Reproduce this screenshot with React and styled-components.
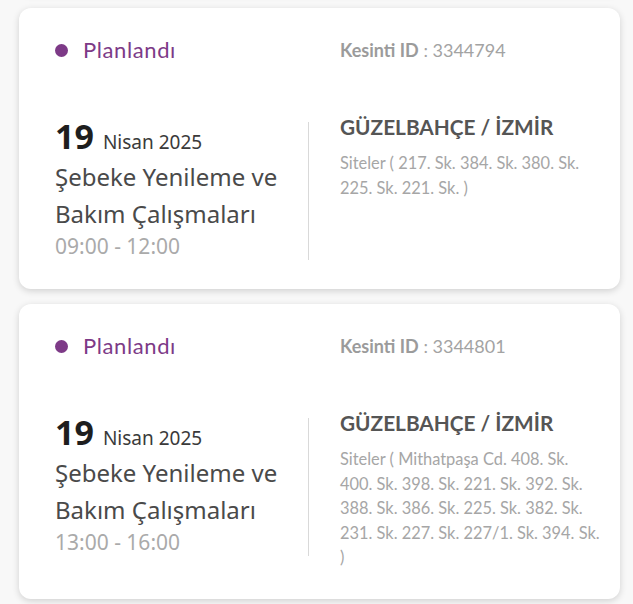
import React from "react";
import styled, { createGlobalStyle } from "styled-components";

const GlobalStyle = createGlobalStyle`
  html, body { margin: 0; padding: 0; background: #f8f8f8; }
  body { font-family: "Lato", "Noto Sans", sans-serif; }
  * { box-sizing: border-box; }
`;

const Page = styled.div`
  padding: 8px 13px 20px 19px;
  display: flex;
  flex-direction: column;
  gap: 15px;
  overflow: hidden;
  height: 604px;
`;

const PrevTail = styled.div`
  height: 20px;
  margin-top: -35px;
  flex: none;
  background: #fff;
  border-radius: 0 0 12px 12px;
  box-shadow: 0 2px 7px rgba(0, 0, 0, 0.16);
`;

const Card = styled.div`
  flex: none;
  background: #fff;
  border-radius: 12px;
  box-shadow: 0 2px 7px rgba(0, 0, 0, 0.16);
  padding: 28px 36px 29px 36px;
  display: grid;
  grid-template-columns: 254px 1fr;
  align-items: start;
  row-gap: 51px;
`;

const Status = styled.div`
  display: flex;
  align-items: center;
  gap: 15px;
  font-family: "Lato", sans-serif;
  font-size: 22px;
  letter-spacing: 0.6px;
  line-height: 28px;
  color: #7d3a87;
`;

const Dot = styled.span`
  width: 13px;
  height: 13px;
  margin-top: 1px;
  border-radius: 50%;
  background: #7d3a87;
  flex: none;
`;

const OutageId = styled.div`
  padding-left: 31px;
  font-family: "Lato", sans-serif;
  font-size: 18px;
  line-height: 28px;
  color: #a3a3a3;
`;

const IdLabel = styled.span`
  font-weight: 700;
  color: #9b9b9b;
`;

const DateCol = styled.div`
  margin-top: 7px;
  border-right: 1px solid #d9d9d9;
  font-family: "Noto Sans", sans-serif;
  color: #4b4b4b;
`;

const DateLine = styled.div`
  display: flex;
  align-items: baseline;
  gap: 9px;
  line-height: 28px;
  height: 28px;
`;

const Day = styled.span`
  font-size: 34px;
  font-weight: 700;
  color: #1e1e1e;
`;

const Month = styled.span`
  font-size: 19px;
  color: #3a3a3a;
`;

const Title = styled.div`
  margin-top: 8px;
  font-size: 24px;
  line-height: 37px;
  color: #4a4a4a;
  padding-right: 20px;
`;

const Time = styled.div`
  font-size: 21px;
  line-height: 28px;
  color: #aaaaaa;
`;

const LocCol = styled.div`
  padding-left: 31px;
  font-family: "Lato", sans-serif;
`;

const City = styled.div`
  font-size: 20.8px;
  font-weight: 700;
  line-height: 24px;
  color: #555;
`;

const Streets = styled.div`
  margin-top: 12px;
  font-size: 16.4px;
  line-height: 24.5px;
  color: #a6a6a6;
`;

const StreetLine = styled.span`
  display: block;
  white-space: nowrap;
`;

const outages = [
  {
    id: "3344794",
    day: "19",
    month: "Nisan 2025",
    title: "Şebeke Yenileme ve Bakım Çalışmaları",
    time: "09:00 - 12:00",
    city: "GÜZELBAHÇE / İZMİR",
    streets: ["Siteler ( 217. Sk. 384. Sk. 380. Sk.", "225. Sk. 221. Sk. )"],
  },
  {
    id: "3344801",
    day: "19",
    month: "Nisan 2025",
    title: "Şebeke Yenileme ve Bakım Çalışmaları",
    time: "13:00 - 16:00",
    city: "GÜZELBAHÇE / İZMİR",
    streets: [
      "Siteler ( Mithatpaşa Cd. 408. Sk.",
      "400. Sk. 398. Sk. 221. Sk. 392. Sk.",
      "388. Sk. 386. Sk. 225. Sk. 382. Sk.",
      "231. Sk. 227. Sk. 227/1. Sk. 394. Sk.",
      ")",
    ],
  },
];

export default function App() {
  return (
    <>
      <GlobalStyle />
      <Page>
        <PrevTail />
        {outages.map((o) => (
          <Card key={o.id}>
            <Status>
              <Dot />
              Planlandı
            </Status>
            <OutageId>
              <IdLabel>Kesinti ID</IdLabel> : {o.id}
            </OutageId>
            <DateCol>
              <DateLine>
                <Day>{o.day}</Day>
                <Month>{o.month}</Month>
              </DateLine>
              <Title>{o.title}</Title>
              <Time>{o.time}</Time>
            </DateCol>
            <LocCol>
              <City>{o.city}</City>
              <Streets>
                {o.streets.map((line, i) => (
                  <StreetLine key={i}>{line}</StreetLine>
                ))}
              </Streets>
            </LocCol>
          </Card>
        ))}
      </Page>
    </>
  );
}
